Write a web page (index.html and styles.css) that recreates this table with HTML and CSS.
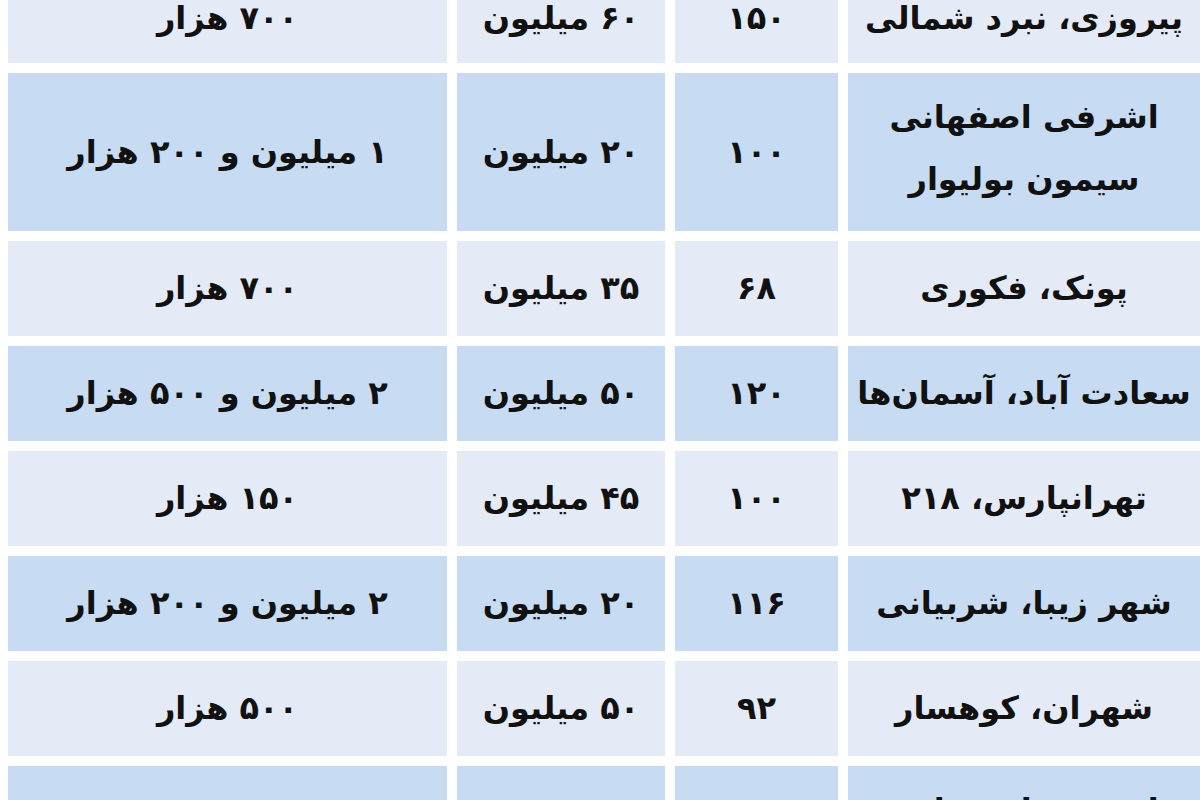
FILE: index.html
```html
<!DOCTYPE html>
<html lang="fa" dir="rtl">
<head>
<meta charset="utf-8">
<title>جدول اجاره</title>
<link rel="stylesheet" href="styles.css">
</head>
<body>
<div class="page">
  <div class="table">
    <div class="row light first"><div class="cell">پیروزی، نبرد شمالی</div><div class="cell">۱۵۰</div><div class="cell">۶۰ میلیون</div><div class="cell">۷۰۰ هزار</div></div>
    <div class="row blue tall"><div class="cell multi">اشرفی اصفهانی<br>سیمون بولیوار</div><div class="cell">۱۰۰</div><div class="cell">۲۰ میلیون</div><div class="cell">۱ میلیون و ۲۰۰ هزار</div></div>
    <div class="row light"><div class="cell">پونک، فکوری</div><div class="cell">۶۸</div><div class="cell">۳۵ میلیون</div><div class="cell">۷۰۰ هزار</div></div>
    <div class="row blue"><div class="cell">سعادت آباد، آسمان‌ها</div><div class="cell">۱۲۰</div><div class="cell">۵۰ میلیون</div><div class="cell">۲ میلیون و ۵۰۰ هزار</div></div>
    <div class="row light"><div class="cell">تهرانپارس، ۲۱۸</div><div class="cell">۱۰۰</div><div class="cell">۴۵ میلیون</div><div class="cell">۱۵۰ هزار</div></div>
    <div class="row blue"><div class="cell">شهر زیبا، شربیانی</div><div class="cell">۱۱۶</div><div class="cell">۲۰ میلیون</div><div class="cell">۲ میلیون و ۲۰۰ هزار</div></div>
    <div class="row light"><div class="cell">شهران، کوهسار</div><div class="cell">۹۲</div><div class="cell">۵۰ میلیون</div><div class="cell">۵۰۰ هزار</div></div>
    <div class="row blue tall"><div class="cell multi">اشرفی اصفهانی<br>سیمون بولیوار</div><div class="cell"></div><div class="cell"></div><div class="cell"></div></div>
  </div>
</div>
</body>
</html>
```

FILE: styles.css
```css
html, body {
  margin: 0;
  padding: 0;
  background: #ffffff;
  overflow: hidden;
}
.page {
  width: 1200px;
  height: 800px;
  overflow: hidden;
  box-sizing: border-box;
  padding-left: 8px;
}
.table {
  display: flex;
  flex-direction: column;
  gap: 10px;
  margin-top: -26px;
}
.row {
  display: grid;
  grid-template-columns: 352px 163px 208px 439px;
  column-gap: 10px;
  height: 95px;
  flex-shrink: 0;
}
.row.first {
  height: 89px;
}
.row.tall {
  height: 158px;
}
.cell {
  display: flex;
  align-items: center;
  justify-content: center;
  text-align: center;
  font-family: "DejaVu Sans", sans-serif;
  font-weight: bold;
  font-size: 32px;
  line-height: 1.45;
  color: #111111;
}
.cell.multi {
  line-height: 62px;
  padding-bottom: 8px;
}
.light .cell {
  background: #e4ebf7;
}
.blue .cell {
  background: #c7dcf3;
}
```
